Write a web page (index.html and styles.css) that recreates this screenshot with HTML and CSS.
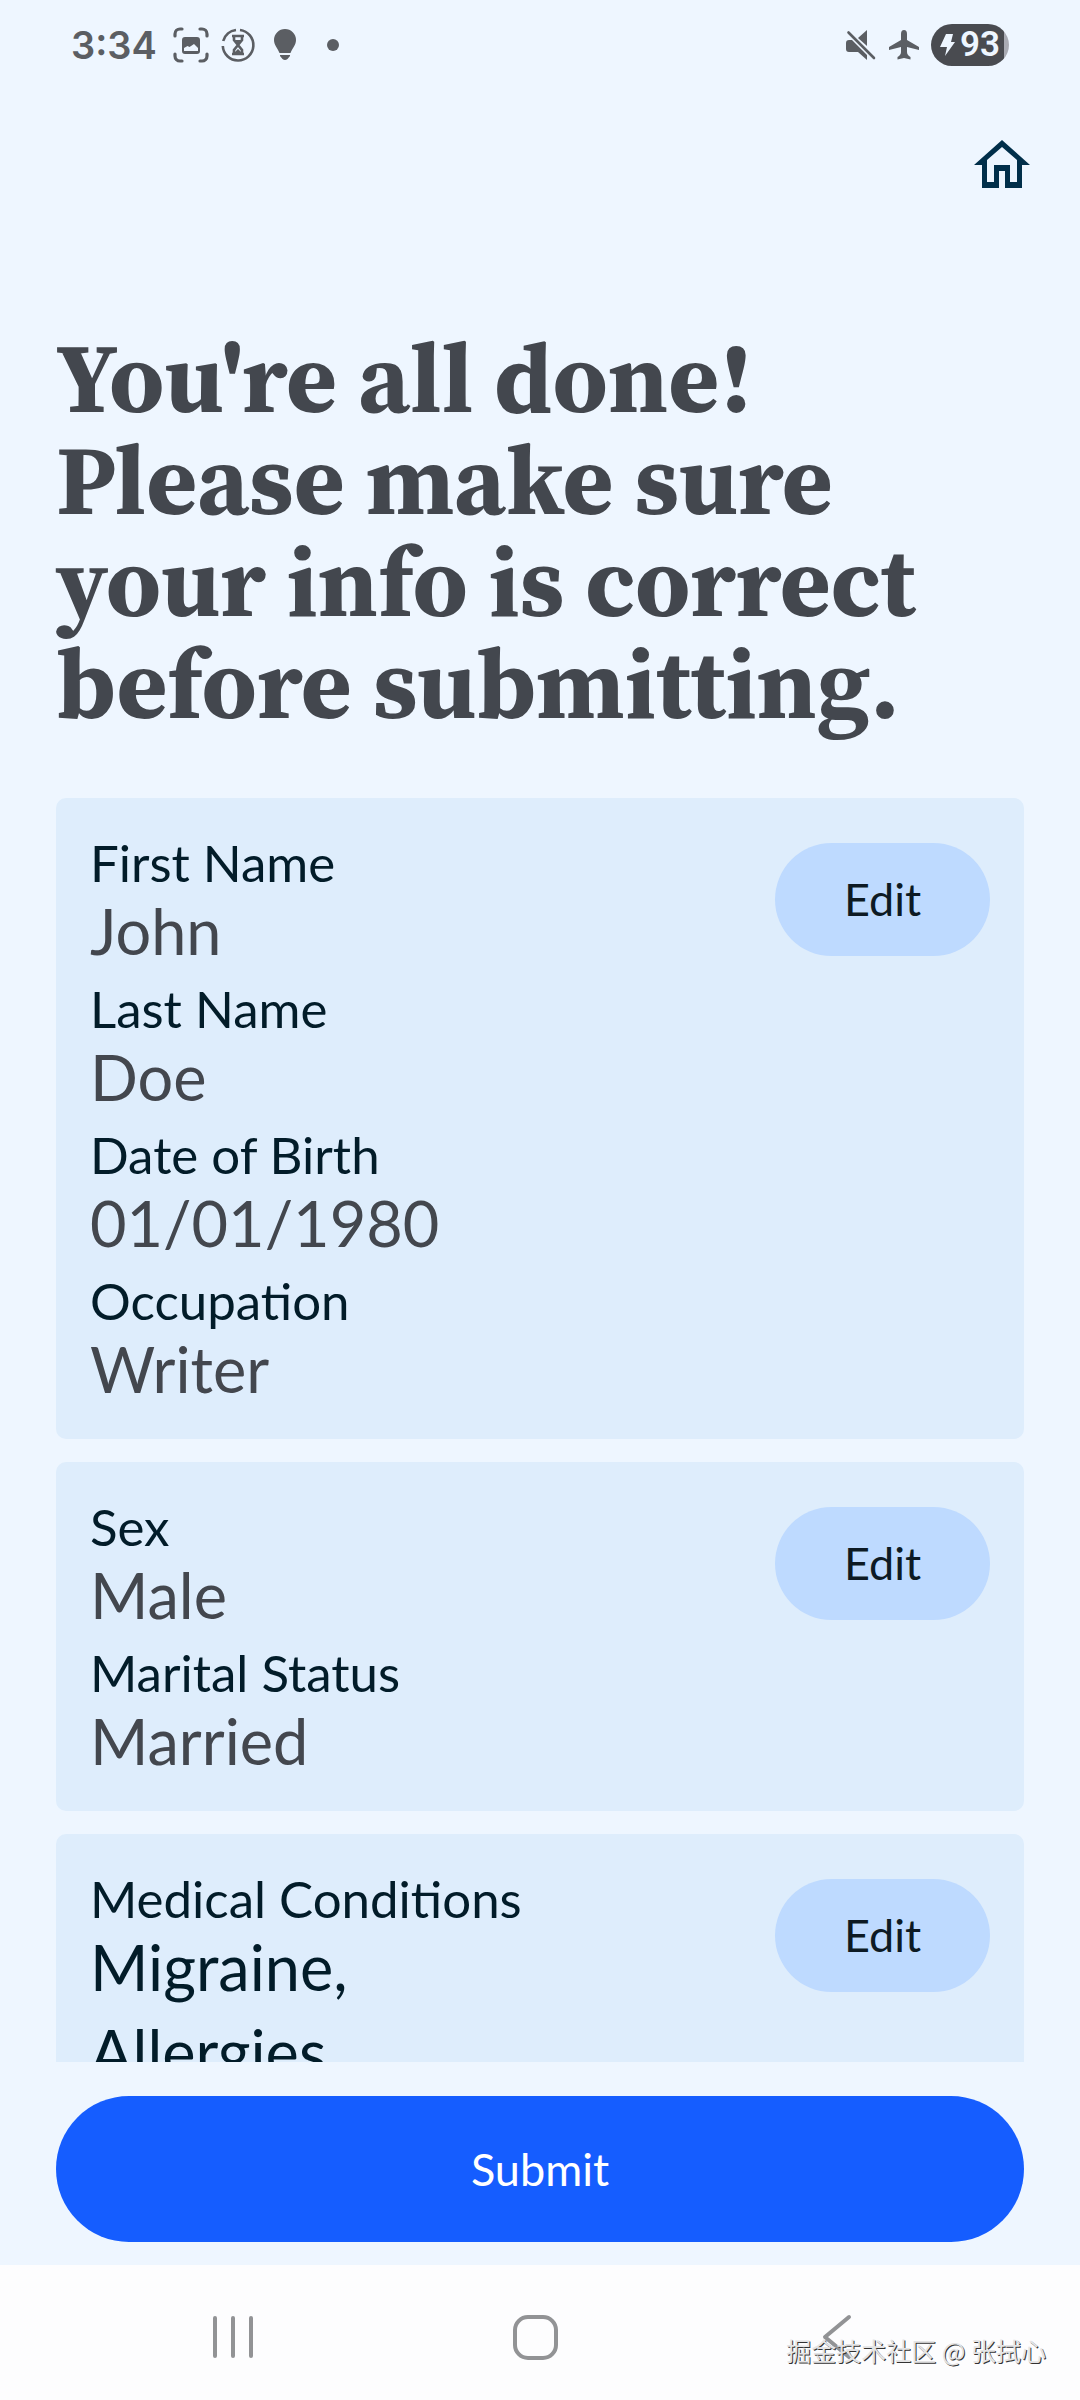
FILE: index.html
```html
<!DOCTYPE html>
<html lang="en">
<head>
<meta charset="utf-8">
<meta name="viewport" content="width=device-width, initial-scale=1">
<title>Review your info</title>
<link rel="stylesheet" href="styles.css">
</head>
<body>
<header class="status-bar">
  <span class="status-time">3:34</span>
  <div class="status-icons">
    <svg width="36" height="36" viewBox="0 0 36 36" fill="none" stroke="currentColor" stroke-width="3.2" stroke-linecap="round">
      <path d="M2 9V7a5 5 0 0 1 5-5h2M27 2h2a5 5 0 0 1 5 5v2M34 27v2a5 5 0 0 1-5 5h-2M9 34H7a5 5 0 0 1-5-5v-2"/>
      <path fill="currentColor" stroke="none" fill-rule="evenodd" d="M12 10h12a3 3 0 0 1 3 3v11a3 3 0 0 1-3 3H12a3 3 0 0 1-3-3V13a3 3 0 0 1 3-3ZM11 21v3h14v-3l-4-4-4.500 3-2-1z"/>
    </svg>
    <svg width="36" height="36" viewBox="0 0 36 36" fill="none" stroke="currentColor" stroke-width="2.600">
      <path d="M20 3A15.300 15.300 0 1 1 2.800 19M3.200 14A15.300 15.300 0 0 1 16 3"/>
      <path d="M12 9h12M12 27h12M14 10v3l4 5-4 5v3M22 10v3l-4 5 4 5v3"/>
      <path fill="currentColor" stroke="none" d="M15 13h6l-3 4zM14 26l4-4 4 4z"/>
    </svg>
    <svg width="36" height="36" viewBox="0 0 36 36" fill="currentColor">
      <path d="M18 2a11 11 0 0 1 11 11c0 5-3.500 8-5.500 13h-11C10.500 21 7 18 7 13A11 11 0 0 1 18 2ZM13 28h10v1l-2.500 3q-2.500 2-5 0L13 29z"/>
    </svg>
  </div>
  <span class="status-dot"></span>
  <div class="status-right">
    <svg width="32" height="32" viewBox="0 0 32 32" fill="currentColor">
      <path d="M1 14q0-3 3-3h3l15 15v5l-9-8H4q-3 0-3-3zM13 9l9-8v16z"/>
      <path fill="none" stroke="currentColor" stroke-width="2.600" stroke-linecap="round" d="M3.500 3.500 29 29"/>
    </svg>
    <svg width="32" height="32" viewBox="0 0 32 32" fill="currentColor">
      <path d="M16 1q3 0 3 4v6l12 7v3l-12-3v5q0 3 3.500 5v2.500L16 29l-6.500 1.500V28q3.500-2 3.500-5v-5L1 21v-3l12-7V5q0-4 3-4Z"/>
    </svg>
    <div class="battery">
      <svg width="15" height="24" viewBox="0 0 15 24" fill="currentColor"><path d="M6 1h7l-2 8h4L5 23l2-9H0z"/></svg>
      <span>93</span>
    </div>
  </div>
</header>

<div class="app-bar">
  <a class="home-link" href="#" aria-label="Home">
    <svg width="56" height="48" viewBox="0 0 56 48" fill="currentColor"><path fill-rule="evenodd" d="M28 0 56 25h-8v23H31V31h-6v17H8V25H0ZM13 42V20L28 7l15 13v22h-7V25H20v17Z"/></svg>
  </a>
</div>

<main class="content">
  <h1 class="title">You're all done!<br>Please make sure<br>your info is correct<br>before submitting.</h1>

  <section class="card">
    <dl class="fields">
      <div><dt>First Name</dt><dd>John</dd></div>
      <div><dt>Last Name</dt><dd>Doe</dd></div>
      <div><dt>Date of Birth</dt><dd>01/01/1980</dd></div>
      <div><dt>Occupation</dt><dd>Writer</dd></div>
    </dl>
    <button class="edit" type="button">Edit</button>
  </section>

  <section class="card">
    <dl class="fields">
      <div><dt>Sex</dt><dd>Male</dd></div>
      <div><dt>Marital Status</dt><dd>Married</dd></div>
    </dl>
    <button class="edit" type="button">Edit</button>
  </section>

  <section class="card">
    <dl class="fields fields-strong">
      <div><dt>Medical Conditions</dt><dd>Migraine,<br>Allergies</dd></div>
    </dl>
    <button class="edit" type="button">Edit</button>
  </section>
</main>

<footer class="actions">
  <button class="submit" type="submit">Submit</button>
</footer>

<nav class="nav-bar" aria-label="System">
  <button type="button" aria-label="Recents">
    <svg width="48" height="48" viewBox="0 0 48 48"><path d="M6 5v38M24 5v38M42 5v38"/></svg>
  </button>
  <button type="button" aria-label="Home screen">
    <svg width="48" height="48" viewBox="0 0 48 48"><rect x="4" y="4" width="41" height="41" rx="13"/></svg>
  </button>
  <button type="button" aria-label="Back">
    <svg width="48" height="48" viewBox="0 0 48 48"><path d="M36 4 12 24l24 20"/></svg>
  </button>
  <span class="watermark" lang="zh">掘金技术社区 @ 张拭心</span>
</nav>
</body>
</html>
```
FILE: styles.css
```css
* {
  box-sizing: border-box;
}

body {
  margin: 0;
  height: 100vh;
  display: flex;
  flex-direction: column;
  background: #eef6ff;
  color: #43474e;
  font-family: Lato, sans-serif;
}

button {
  border: 0;
  padding: 0;
  font-family: inherit;
  cursor: pointer;
}

svg {
  display: block;
}

.status-bar {
  display: flex;
  align-items: center;
  height: 90px;
  padding: 0 71px;
  color: #5b5e63;
}

.status-time {
  font: 600 38px/48px Inter, sans-serif;
}

.status-icons {
  display: flex;
  gap: 11px;
  margin-left: 16px;
}

.status-dot {
  width: 12px;
  height: 12px;
  margin-left: 24px;
  border-radius: 50%;
  background: currentColor;
}

.status-right {
  display: flex;
  align-items: center;
  gap: 11px;
  margin-left: auto;
}

.battery {
  display: flex;
  align-items: center;
  gap: 5px;
  width: 78px;
  height: 42px;
  padding-left: 9px;
  border-radius: 21px;
  background: linear-gradient(90deg, #494b50 93%, #a9abb3 93%);
  color: #eef6ff;
  font: 600 35px/42px Roboto, sans-serif;
}

.app-bar {
  display: flex;
  justify-content: flex-end;
  padding: 50px 50px 139px;
}

.home-link {
  color: #012f4a;
}

.content {
  flex: 1;
  min-height: 0;
  padding: 0 56px;
  overflow-y: auto;
  scrollbar-width: none;
}

.title {
  margin: 0 0 63px;
  font: bold 98px/102px "Source Serif 4", "Source Serif Pro", "Noto Serif CJK SC", "Liberation Serif", serif;
}

.card {
  display: flex;
  justify-content: space-between;
  align-items: flex-start;
  margin-bottom: 23px;
  padding: 40px 34px 28px;
  border-radius: 10px;
  background: #deedfc;
}

.fields {
  display: flex;
  flex-direction: column;
  gap: 11px;
  margin: 0;
}

.fields dt {
  color: #021c29;
  font-size: 51px;
  line-height: 50px;
}

.fields dd {
  margin: 0;
  font-size: 63px;
  line-height: 85px;
}

.fields-strong dd {
  color: #021c29;
}

.edit {
  width: 215px;
  height: 113px;
  margin-top: 5px;
  padding-bottom: 2px;
  border-radius: 57px;
  background: #bedaff;
  color: #0d1a24;
  font-size: 45px;
}

.actions {
  padding: 34px 56px 23px;
}

.submit {
  display: block;
  width: 100%;
  height: 146px;
  border-radius: 73px;
  background: #155dff;
  color: #fff;
  font-size: 45px;
}

.nav-bar {
  position: relative;
  display: flex;
  justify-content: space-around;
  align-items: center;
  height: 135px;
  padding: 8px 92px 0 82px;
  background: #fdfdfe;
}

.nav-bar button {
  background: none;
}

.nav-bar svg {
  fill: none;
  stroke: #929395;
  stroke-width: 4;
  stroke-linecap: round;
  stroke-linejoin: round;
}

.watermark {
  position: absolute;
  right: 34px;
  bottom: 32px;
  color: #e4e4e5;
  font: 25px/36px "Noto Sans CJK SC", sans-serif;
  text-shadow: 1px 1px 0 #333;
}
```
